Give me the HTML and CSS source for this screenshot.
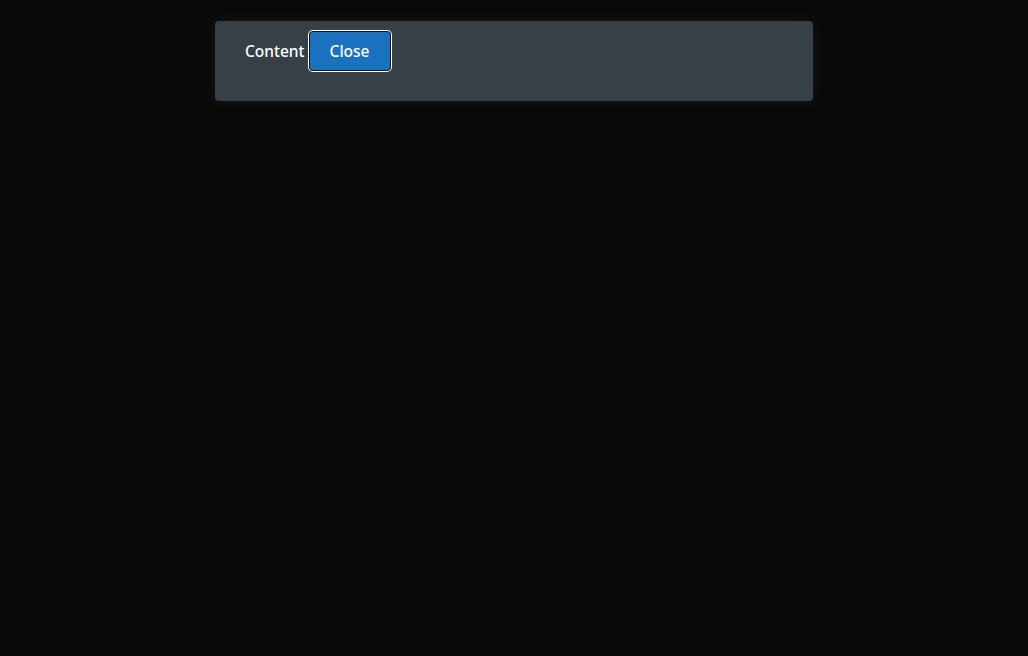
FILE: index.html
```html
<!DOCTYPE html>
<html lang="en">
<head>
<meta charset="utf-8">
<title>Dialog</title>
<link rel="stylesheet" href="styles.css">
</head>
<body>
<div class="page">
  <div class="panel">
    <span class="label">Content</span>
    <button class="btn" type="button">Close</button>
  </div>
</div>
</body>
</html>
```
FILE: styles.css
```css
html, body {
  margin: 0;
  padding: 0;
  background: #0a0a0a;
  height: 100%;
}
body {
  font-family: "Noto Sans", "Open Sans", sans-serif;
  color: #ffffff;
}
.page {
  display: flex;
  justify-content: center;
  padding-top: 21px;
}
.panel {
  box-sizing: border-box;
  width: 598px;
  height: 80px;
  background: #373f47;
  border-radius: 4px;
  box-shadow: 0 0 12px rgba(40, 44, 48, 0.35);
  padding: 11px 30px 0 30px;
  display: flex;
  align-items: flex-start;
  gap: 5px;
}
.label {
  font-size: 15.5px;
  font-weight: 500;
  line-height: 38px;
}
.btn {
  box-sizing: border-box;
  width: 80px;
  height: 38px;
  background: #1a72bf;
  color: #ffffff;
  border: none;
  border-radius: 3px;
  font-family: inherit;
  font-size: 15.5px;
  font-weight: 500;
  box-shadow: 0 0 0 1px #111417, 0 0 0 2px #ffffff;
  cursor: pointer;
  padding: 0;
}
```
